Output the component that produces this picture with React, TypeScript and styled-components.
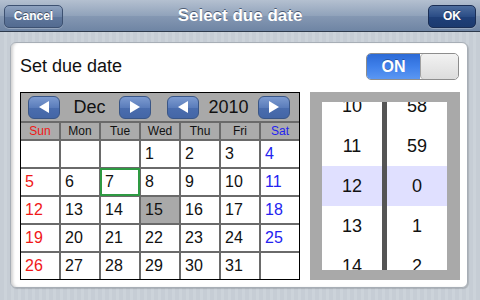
import React from "react";
import styled, { createGlobalStyle } from "styled-components";

const GlobalStyle = createGlobalStyle`
  html, body {
    margin: 0;
    padding: 0;
    width: 480px;
    height: 300px;
    overflow: hidden;
    font-family: "Liberation Sans", Arial, sans-serif;
  }
`;

const Screen = styled.div`
  width: 480px;
  height: 300px;
  display: flex;
  flex-direction: column;
`;

const NavBar = styled.div`
  height: 31px;
  flex: none;
  display: grid;
  grid-template-columns: 1fr auto 1fr;
  align-items: center;
  padding: 0 4px;
  background: linear-gradient(#b4c0d0 0%, #91a3bb 50%, #8598b3 51%, #6f85a4 100%);
  border-bottom: 1px solid #2d3a4c;
`;

const Title = styled.div`
  color: #fff;
  font-weight: bold;
  font-size: 17px;
  text-shadow: 0 -1px 0 rgba(40, 55, 80, 0.7);
`;

const BarButton = styled.button<{ $done?: boolean }>`
  justify-self: ${(p) => (p.$done ? "end" : "start")};
  width: ${(p) => (p.$done ? "48px" : "59px")};
  height: 23px;
  margin-top: 1px;
  border-radius: 5px;
  border: 1px solid ${(p) => (p.$done ? "#1a2e55" : "#3d5171")};
  background: ${(p) =>
    p.$done
      ? "linear-gradient(#4d6d9e 0%, #2b4d86 50%, #1f4079 51%, #1c3a6f 100%)"
      : "linear-gradient(#8fa3c0 0%, #6f86a9 50%, #5f779c 51%, #536b90 100%)"};
  color: #fff;
  font-family: "Liberation Sans", Arial, sans-serif;
  font-weight: bold;
  font-size: 12px;
  text-shadow: 0 -1px 0 rgba(0, 0, 0, 0.45);
  box-shadow: 0 1px 0 rgba(255, 255, 255, 0.25);
  padding: 0;
`;

const Content = styled.div`
  flex: 1;
  padding: 10px 12px 12px 10px;
  background: repeating-linear-gradient(
    90deg,
    #c6cdd5 0px,
    #c6cdd5 4px,
    #ccd3da 4px,
    #ccd3da 7px
  );
`;

const Panel = styled.div`
  height: 100%;
  box-sizing: border-box;
  background: #fff;
  border-radius: 6px;
  border: 1px solid #a7aeb6;
  box-shadow: inset 3px 0 3px -1px rgba(0, 0, 0, 0.18), 1px 1px 1px rgba(0, 0, 0, 0.15);
  padding: 10px 7px 7px 9px;
  display: flex;
  flex-direction: column;
  gap: 12px;
`;

const TopRow = styled.div`
  display: flex;
  align-items: center;
  justify-content: space-between;
  height: 27px;
`;

const Label = styled.div`
  font-size: 18px;
  color: #111;
`;

const Switch = styled.div`
  width: 93px;
  height: 27px;
  box-sizing: border-box;
  margin-right: 1px;
  border: 1px solid #8d8d8d;
  border-radius: 5px;
  overflow: hidden;
  display: flex;
`;

const SwitchOn = styled.div`
  width: 53px;
  background: linear-gradient(#2c6ad6 0%, #3f80ea 50%, #5b97f2 100%);
  color: #fff;
  font-weight: bold;
  font-size: 16px;
  display: flex;
  align-items: center;
  justify-content: center;
  text-shadow: 0 -1px 0 rgba(0, 0, 0, 0.3);
`;

const SwitchKnob = styled.div`
  flex: 1;
  border-left: 1px solid #a0a0a0;
  border-radius: 4px;
  background: linear-gradient(#f2f2f2, #dcdcdc);
`;

const BottomRow = styled.div`
  display: flex;
  gap: 10px;
`;

const Calendar = styled.div`
  width: 280px;
  box-sizing: border-box;
  border: 1px solid #000;
  background: #6a6a6a;
`;

const CalHeader = styled.div`
  height: 28px;
  background: #a9a9a9;
  display: grid;
  grid-template-columns: 1fr 1fr;
`;

const NavGroup = styled.div`
  display: flex;
  align-items: center;
  justify-content: space-between;
  padding: 0 9px 0 7px;
  font-size: 18px;
  color: #111;
`;

const ArrowButton = styled.div`
  width: 32px;
  height: 23px;
  box-sizing: border-box;
  border-radius: 6px;
  border: 1px solid #3a5686;
  background: linear-gradient(#7d9bd0 0%, #5b7dbb 50%, #4a6dae 51%, #4466a6 100%);
  display: flex;
  align-items: center;
  justify-content: center;
`;

const Grid = styled.div`
  display: grid;
  grid-template-columns: repeat(7, 38px);
  grid-template-rows: 16px repeat(5, 26px);
  gap: 2px;
  padding-top: 2px;
`;

const DayName = styled.div<{ $color: string }>`
  background: #ababab;
  color: ${(p) => p.$color};
  font-size: 12px;
  display: flex;
  align-items: center;
  justify-content: center;
`;

const DayCell = styled.div<{ $color: string; $today?: boolean; $marked?: boolean }>`
  position: relative;
  background: ${(p) => (p.$marked ? "#a9a9a9" : "#fff")};
  color: ${(p) => p.$color};
  font-size: 16px;
  display: flex;
  align-items: center;
  padding-left: 4px;
  outline: ${(p) => (p.$today ? "2px solid #2e9a42" : "none")};
  outline-offset: -1px;
  z-index: ${(p) => (p.$today ? 1 : 0)};
`;

const Picker = styled.div`
  width: 150px;
  box-sizing: border-box;
  background: #a9a9a9;
  padding: 10px 13px 10px 12px;
`;

const Wheel = styled.div`
  position: relative;
  height: 168px;
  overflow: hidden;
  background: #fff;
  display: flex;
`;

const WheelColumn = styled.div`
  position: relative;
  z-index: 1;
  width: 60px;
  margin-top: -16px;
`;

const WheelDivider = styled.div`
  position: relative;
  z-index: 2;
  width: 5px;
  background: #555;
`;

const WheelItem = styled.div`
  height: 40px;
  display: flex;
  align-items: center;
  justify-content: center;
  font-size: 18px;
  color: #111;
`;

const Selection = styled.div`
  position: absolute;
  z-index: 0;
  left: 0;
  right: 0;
  top: 64px;
  height: 40px;
  background: #e0e0ff;
`;

const Arrow = ({ dir }: { dir: "left" | "right" }) => (
  <svg width="12" height="14" viewBox="0 0 12 14">
    {dir === "left" ? (
      <polygon points="11,1 11,13 1,7" fill="#fff" />
    ) : (
      <polygon points="1,1 1,13 11,7" fill="#fff" />
    )}
  </svg>
);

const dayNames = ["Sun", "Mon", "Tue", "Wed", "Thu", "Fri", "Sat"];

const colorFor = (i: number) => (i === 0 ? "#f01818" : i === 6 ? "#2323f0" : "#111");

export default function App() {
  const cells: (number | null)[] = [null, null, null];
  for (let d = 1; d <= 31; d++) cells.push(d);
  while (cells.length < 35) cells.push(null);

  return (
    <Screen>
      <GlobalStyle />
      <NavBar>
        <BarButton>Cancel</BarButton>
        <Title>Select due date</Title>
        <BarButton $done>OK</BarButton>
      </NavBar>
      <Content>
        <Panel>
          <TopRow>
            <Label>Set due date</Label>
            <Switch>
              <SwitchOn>ON</SwitchOn>
              <SwitchKnob />
            </Switch>
          </TopRow>
          <BottomRow>
            <Calendar>
              <CalHeader>
                <NavGroup>
                  <ArrowButton>
                    <Arrow dir="left" />
                  </ArrowButton>
                  Dec
                  <ArrowButton>
                    <Arrow dir="right" />
                  </ArrowButton>
                </NavGroup>
                <NavGroup>
                  <ArrowButton>
                    <Arrow dir="left" />
                  </ArrowButton>
                  2010
                  <ArrowButton>
                    <Arrow dir="right" />
                  </ArrowButton>
                </NavGroup>
              </CalHeader>
              <Grid>
                {dayNames.map((n, i) => (
                  <DayName key={n} $color={colorFor(i)}>
                    {n}
                  </DayName>
                ))}
                {cells.map((d, i) => (
                  <DayCell
                    key={i}
                    $color={colorFor(i % 7)}
                    $today={d === 7}
                    $marked={d === 15}
                  >
                    {d}
                  </DayCell>
                ))}
              </Grid>
            </Calendar>
            <Picker>
              <Wheel>
                <Selection />
                <WheelColumn>
                  {[10, 11, 12, 13, 14].map((h) => (
                    <WheelItem key={h}>{h}</WheelItem>
                  ))}
                </WheelColumn>
                <WheelDivider />
                <WheelColumn>
                  {[58, 59, 0, 1, 2].map((m) => (
                    <WheelItem key={m}>{m}</WheelItem>
                  ))}
                </WheelColumn>
              </Wheel>
            </Picker>
          </BottomRow>
        </Panel>
      </Content>
    </Screen>
  );
}
